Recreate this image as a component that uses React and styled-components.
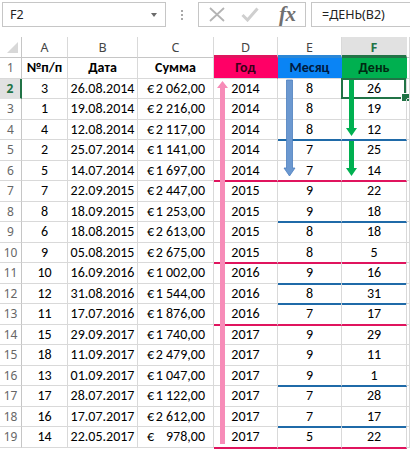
import React from 'react';
import styled, { createGlobalStyle } from 'styled-components';

const GRID = '#d9d9d9';
const PINK_LINE = '#e0145e';
const BLUE_LINE = '#1f6aa8';
const XL_GREEN = '#217346';
const CELL_FONT = '"Carlito", "Lato", "Open Sans", sans-serif';
const UI_FONT = '"Noto Sans", "Open Sans", sans-serif';

const Global = createGlobalStyle`
  html, body { margin: 0; padding: 0; background: #fff; overflow: hidden; }
  * { box-sizing: border-box; }
`;

const Page = styled.div`
  width: 410px;
  height: 449px;
  overflow: hidden;
  background: #fff;
`;

/* ---------- formula bar ---------- */
const FormulaBar = styled.div`
  display: flex;
  align-items: center;
  height: 37px;
  padding: 0 0 8px 2px;
  font-family: ${UI_FONT};
`;

const NameBox = styled.div`
  width: 164px;
  height: 25px;
  border: 1px solid #c6c6c6;
  display: flex;
  align-items: center;
  justify-content: space-between;
  padding: 0 8px 0 7px;
  font-size: 12.5px;
  color: #222;
`;

const DropTri = styled.span`
  width: 0;
  height: 0;
  border-left: 3.5px solid transparent;
  border-right: 3.5px solid transparent;
  border-top: 4px solid #6a6a6a;
`;

const Dots = styled.div`
  width: 32px;
  display: flex;
  flex-direction: column;
  align-items: center;
  gap: 2px;
  span { width: 2px; height: 2px; background: #a8a8a8; }
`;

const ActionBox = styled.div`
  width: 108px;
  height: 25px;
  border: 1px solid #c6c6c6;
  display: flex;
  align-items: center;
  padding-left: 10px;
  gap: 16px;
`;

const Fx = styled.span`
  font-family: "Liberation Serif", serif;
  font-style: italic;
  font-weight: bold;
  font-size: 21px;
  color: #707070;
  margin-left: 4px;
  line-height: 1;
  letter-spacing: -0.5px;
`;

const FormulaInput = styled.div`
  flex: 1;
  height: 25px;
  margin-left: 5px;
  border: 1px solid #c6c6c6;
  border-right: none;
  display: flex;
  align-items: center;
  padding-left: 10px;
  font-size: 12.5px;
  color: #222;
`;

/* ---------- sheet ---------- */
const Sheet = styled.div`
  position: relative;
  display: grid;
  grid-template-columns: 22px 46px 70px 76px 64px 64px 65px 1fr;
  grid-template-rows: 21px;
  grid-auto-rows: 20.5px;
`;

const Corner = styled.div`
  border-right: 1px solid #c6c6c6;
  border-bottom: 1px solid #c6c6c6;
  position: relative;
  &::after {
    content: '';
    position: absolute;
    right: 3px;
    bottom: 4px;
    width: 0;
    height: 0;
    border-left: 11px solid transparent;
    border-bottom: 11px solid #d8d8d8;
  }
`;

const ColHead = styled.div`
  display: flex;
  align-items: center;
  justify-content: center;
  font-family: ${UI_FONT};
  font-size: 12.5px;
  color: ${p => (p.$selected ? XL_GREEN : '#444')};
  font-weight: ${p => (p.$selected ? 700 : 400)};
  background: ${p => (p.$selected ? '#e1e1e1' : '#fff')};
  border-right: 1px solid ${p => (p.$selected ? '#e1e1e1' : GRID)};
  border-bottom: ${p => (p.$accent ? `3px solid ${p.$accent}` : '1px solid #c6c6c6')};
  padding-top: ${p => (p.$accent ? '2px' : '0')};
`;

const RowHead = styled.div`
  display: flex;
  align-items: center;
  justify-content: center;
  font-family: ${UI_FONT};
  font-size: 12px;
  color: ${p => (p.$selected ? XL_GREEN : '#666')};
  font-weight: ${p => (p.$selected ? 700 : 400)};
  background: ${p => (p.$selected ? '#e1e1e1' : '#fff')};
  border-right: ${p => (p.$selected ? `2px solid ${XL_GREEN}` : '1px solid #c6c6c6')};
  border-bottom: 1px solid ${p => (p.$selected ? '#e1e1e1' : GRID)};
`;

const lineColor = { pink: PINK_LINE, blue: BLUE_LINE };

const Cell = styled.div`
  position: relative;
  display: flex;
  align-items: center;
  justify-content: ${p => p.$justify || 'center'};
  padding: ${p => p.$pad || '0'};
  font-family: ${CELL_FONT};
  font-size: 14px;
  font-weight: ${p => (p.$bold ? 700 : 400)};
  color: ${p => p.$color || '#000'};
  background: ${p => p.$bg || 'transparent'};
  border-right: 1px solid ${p => (p.$bg ? p.$bg : GRID)};
  border-bottom: ${p => (p.$line ? `2px solid ${lineColor[p.$line]}` : `1px solid ${GRID}`)};
  margin-bottom: ${p => (p.$line ? '-1px' : '0')};
  z-index: ${p => (p.$line ? 1 : 0)};
  white-space: pre;
  ${p =>
    p.$selected &&
    `
    &::after {
      content: '';
      position: absolute;
      left: -1px; top: -1px; right: 0; bottom: -1px;
      border: 2px solid ${XL_GREEN};
      z-index: 3;
    }
    &::before {
      content: '';
      position: absolute;
      right: -4px; bottom: -4px;
      width: 7px; height: 7px;
      background: ${XL_GREEN};
      border: 1px solid #fff;
      z-index: 4;
    }
  `}
`;

const ArrowSvg = styled.svg`
  position: absolute;
  overflow: visible;
  z-index: 5;
  pointer-events: none;
`;

function Arrow({ x, y1, y2, up, color, stroke, shaft = 5, head = 11, headLen = 8 }) {
  const len = y2 - y1;
  const hw = shaft / 2;
  const hh = head / 2;
  const w = head;
  const cx = hh;
  let d;
  if (up) {
    d = `M${cx} 0 L${cx + hh} ${headLen} L${cx + hw} ${headLen} L${cx + hw} ${len} L${cx - hw} ${len} L${cx - hw} ${headLen} L${cx - hh} ${headLen} Z`;
  } else {
    d = `M${cx - hw} 0 L${cx + hw} 0 L${cx + hw} ${len - headLen} L${cx + hh} ${len - headLen} L${cx} ${len} L${cx - hh} ${len - headLen} L${cx - hw} ${len - headLen} Z`;
  }
  return (
    <ArrowSvg
      width={w}
      height={len}
      viewBox={`0 0 ${w} ${len}`}
      style={{ left: x - hh, top: y1 }}
    >
      <path d={d} fill={color} stroke={stroke || 'none'} strokeWidth={stroke ? 0.8 : 0} />
    </ArrowSvg>
  );
}

const data = [
  [3, '26.08.2014', '2 062,00', 2014, 8, 26],
  [1, '19.08.2014', '2 216,00', 2014, 8, 19],
  [4, '12.08.2014', '2 117,00', 2014, 8, 12],
  [2, '25.07.2014', '1 141,00', 2014, 7, 25],
  [5, '14.07.2014', '1 697,00', 2014, 7, 14],
  [7, '22.09.2015', '2 447,00', 2015, 9, 22],
  [8, '18.09.2015', '1 253,00', 2015, 9, 18],
  [6, '18.08.2015', '2 613,00', 2015, 8, 18],
  [9, '05.08.2015', '2 675,00', 2015, 8, 5],
  [10, '16.09.2016', '1 002,00', 2016, 9, 16],
  [12, '31.08.2016', '1 544,00', 2016, 8, 31],
  [11, '17.07.2016', '1 876,00', 2016, 7, 17],
  [15, '29.09.2017', '1 740,00', 2017, 9, 29],
  [18, '11.09.2017', '2 479,00', 2017, 9, 11],
  [13, '01.09.2017', '1 047,00', 2017, 9, 1],
  [17, '28.07.2017', '1 122,00', 2017, 7, 28],
  [16, '17.07.2017', '2 612,00', 2017, 7, 17],
  [14, '22.05.2017', '978,00', 2017, 5, 22],
];

const pinkAfter = new Set([6, 10, 13, 19]);
const blueAfter = new Set([4, 8, 11, 12, 16, 18]);

export default function App() {
  return (
    <Page>
      <Global />
      <FormulaBar>
        <NameBox>
          <span>F2</span>
          <DropTri />
        </NameBox>
        <Dots>
          <span />
          <span />
          <span />
        </Dots>
        <ActionBox>
          <svg width="16" height="15" viewBox="0 0 16 15">
            <path d="M1 1 L15 14 M15 1 L1 14" stroke="#b4b4b4" strokeWidth="1.8" fill="none" />
          </svg>
          <svg width="18" height="15" viewBox="0 0 18 15">
            <path d="M1.5 8 L6.5 13 L16.5 1.5" stroke="#cfcfcf" strokeWidth="3" fill="none" />
          </svg>
          <Fx>fx</Fx>
        </ActionBox>
        <FormulaInput>=ДЕНЬ(B2)</FormulaInput>
      </FormulaBar>

      <Sheet>
        <Corner />
        <ColHead>A</ColHead>
        <ColHead>B</ColHead>
        <ColHead>C</ColHead>
        <ColHead $accent={PINK_LINE}>D</ColHead>
        <ColHead $accent="#2b87d6">E</ColHead>
        <ColHead $accent={XL_GREEN} $selected>F</ColHead>
        <ColHead />

        <RowHead>1</RowHead>
        <Cell $bold>№п/п</Cell>
        <Cell $bold>Дата</Cell>
        <Cell $bold>Сумма</Cell>
        <Cell $bold $bg="#ff0066" $color="#3a0018">Год</Cell>
        <Cell $bold $bg="#0a84f5" $color="#001a40">Месяц</Cell>
        <Cell $bold $bg="#00b050" $color="#002a12">День</Cell>
        <Cell />

        {data.map((r, i) => {
          const rowNo = i + 2;
          const pink = pinkAfter.has(rowNo);
          const blue = blueAfter.has(rowNo);
          const dLine = pink ? 'pink' : undefined;
          const efLine = pink ? 'pink' : blue ? 'blue' : undefined;
          return (
            <React.Fragment key={rowNo}>
              <RowHead $selected={rowNo === 2}>{rowNo}</RowHead>
              <Cell>{r[0]}</Cell>
              <Cell>{r[1]}</Cell>
              <Cell $justify="space-between" $pad="0 8px 0 9px">
                <span>€</span>
                <span>{r[2]}</span>
              </Cell>
              <Cell $line={dLine}>{r[3]}</Cell>
              <Cell $line={efLine}>{r[4]}</Cell>
              <Cell $line={efLine} $selected={rowNo === 2}>{r[5]}</Cell>
              <Cell />
            </React.Fragment>
          );
        })}

        <Arrow x={222.5} y1={44} y2={407} up color="#f78cb8" shaft={5} head={11} headLen={7} />
        <Arrow x={289} y1={43} y2={139} color="#6b98d0" stroke="#4d7fbf" shaft={6} head={11} headLen={8} />
        <Arrow x={351.5} y1={43} y2={99} color="#00b050" shaft={5} head={11} headLen={8} />
        <Arrow x={351.5} y1={104} y2={139} color="#00b050" shaft={5} head={11} headLen={8} />
      </Sheet>
    </Page>
  );
}
